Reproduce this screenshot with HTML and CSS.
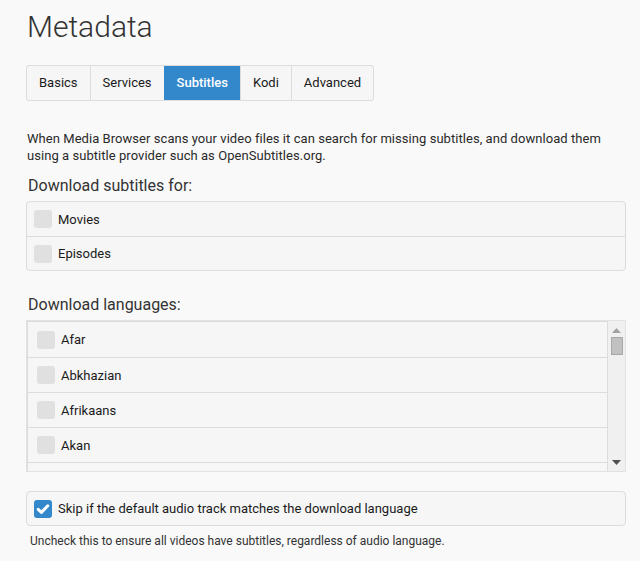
FILE: index.html
```html
<!DOCTYPE html>
<html>
<head>
<meta charset="utf-8">
<title>Metadata</title>
<link rel="stylesheet" href="styles.css">
</head>
<body>
<div class="page">
  <h1 class="title">Metadata</h1>
  <nav class="tabs">
    <a class="tab">Basics</a>
    <a class="tab">Services</a>
    <a class="tab active">Subtitles</a>
    <a class="tab">Kodi</a>
    <a class="tab">Advanced</a>
  </nav>
  <p class="intro">When Media Browser scans your video files it can search for missing subtitles, and download them using a subtitle provider such as OpenSubtitles.org.</p>

  <h2 class="section first">Download subtitles for:</h2>
  <div class="group">
    <label class="row"><span class="cb"></span>Movies</label>
    <label class="row"><span class="cb"></span>Episodes</label>
  </div>

  <h2 class="section">Download languages:</h2>
  <div class="listbox">
    <div class="list">
      <label class="item"><span class="cb"></span>Afar</label>
      <label class="item"><span class="cb"></span>Abkhazian</label>
      <label class="item"><span class="cb"></span>Afrikaans</label>
      <label class="item"><span class="cb"></span>Akan</label>
      <div class="item"></div>
    </div>
    <div class="scrollbar">
      <svg class="arrow" width="9" height="5" viewBox="0 0 9 5"><path d="M0 5 L4.5 0 L9 5 Z" fill="#a3a3a3"/></svg>
      <div class="thumb"></div>
      <div class="track"></div>
      <svg class="arrow" width="9" height="5" viewBox="0 0 9 5"><path d="M0 0 L9 0 L4.5 5 Z" fill="#505050"/></svg>
    </div>
  </div>

  <div class="group skip">
    <label class="row"><span class="cb checked"><svg width="18" height="18" viewBox="0 0 18 18"><path d="M4.2 9.4 L7.4 12.4 L13.8 5.8" fill="none" stroke="#fff" stroke-width="3" stroke-linecap="round" stroke-linejoin="round"/></svg></span>Skip if the default audio track matches the download language</label>
  </div>
  <p class="help">Uncheck this to ensure all videos have subtitles, regardless of audio language.</p>
</div>
</body>
</html>
```

FILE: styles.css
```css
html, body {
  margin: 0;
  padding: 0;
  background: #f9f9f9;
}
body {
  font-family: Roboto, "Noto Sans", "Liberation Sans", sans-serif;
  color: #333;
}
.page {
  padding: 9px 14px 0 26px;
}
.title {
  margin: 0 0 0 1px;
  font-size: 30px;
  line-height: 36px;
  font-weight: 300;
  color: #333;
}
.tabs {
  display: inline-flex;
  margin-top: 20px;
  border: 1px solid #dcdcdc;
  border-radius: 3px;
  background: #f6f6f6;
  overflow: hidden;
}
.tab {
  display: block;
  padding: 0 12px;
  height: 34px;
  line-height: 34px;
  font-size: 13px;
  font-weight: 400;
  color: #1a1a1a;
  border-left: 1px solid #dcdcdc;
}
.tab:first-child {
  border-left: none;
}
.tab.active {
  background: #3388cc;
  color: #fff;
  font-weight: 500;
  border-left-color: #3388cc;
}
.intro {
  margin: 29px 0 0 1px;
  font-size: 13px;
  line-height: 17px;
  letter-spacing: 0.05px;
  color: #2a2a2a;
}
.section {
  margin: 24px 0 5px 2px;
  font-size: 16px;
  line-height: 20px;
  font-weight: 400;
  color: #333;
}
.section.first {
  margin-top: 12px;
}
.group {
  border: 1px solid #dcdcdc;
  border-radius: 4px;
  background: #f6f6f6;
}
.row {
  display: flex;
  align-items: center;
  gap: 6px;
  height: 34px;
  padding-left: 7px;
  font-size: 13px;
  font-weight: 400;
  color: #1a1a1a;
  border-top: 1px solid #dcdcdc;
}
.row:first-child {
  border-top: none;
}
.row:last-child {
  height: 33px;
}
.cb {
  display: block;
  width: 18px;
  height: 18px;
  border-radius: 3px;
  background: #e0e0e0;
  flex: none;
}
.cb.checked {
  background: #3388cc;
}
.cb svg {
  display: block;
}
.listbox {
  display: flex;
  height: 150px;
  border: 1px solid #e2e2e2;
  overflow: hidden;
  background: #f6f6f6;
}
.list {
  flex: 1;
  overflow: hidden;
}
.item {
  display: flex;
  align-items: center;
  gap: 6px;
  height: 34px;
  padding-left: 9px;
  font-size: 13px;
  font-weight: 400;
  color: #1a1a1a;
  border-top: 1px solid #dcdcdc;
  border-left: 1px solid #dcdcdc;
  border-right: 1px solid #dcdcdc;
}
.item:first-child {
  height: 35px;
}
.scrollbar {
  width: 17px;
  flex: none;
  display: flex;
  flex-direction: column;
  align-items: center;
  background: #f0f0f0;
  padding: 7px 0 6px;
}
.thumb {
  margin-top: 4px;
  width: 10px;
  height: 16px;
  background: #c1c1c1;
  border: 1px solid #a8a8a8;
}
.track {
  flex: 1;
}
.arrow {
  display: block;
}
.skip {
  margin-top: 19px;
}
.skip .row {
  height: 33px;
}
.help {
  margin: 7px 0 0 4px;
  font-size: 12px;
  line-height: 16px;
  color: #333;
}
```
